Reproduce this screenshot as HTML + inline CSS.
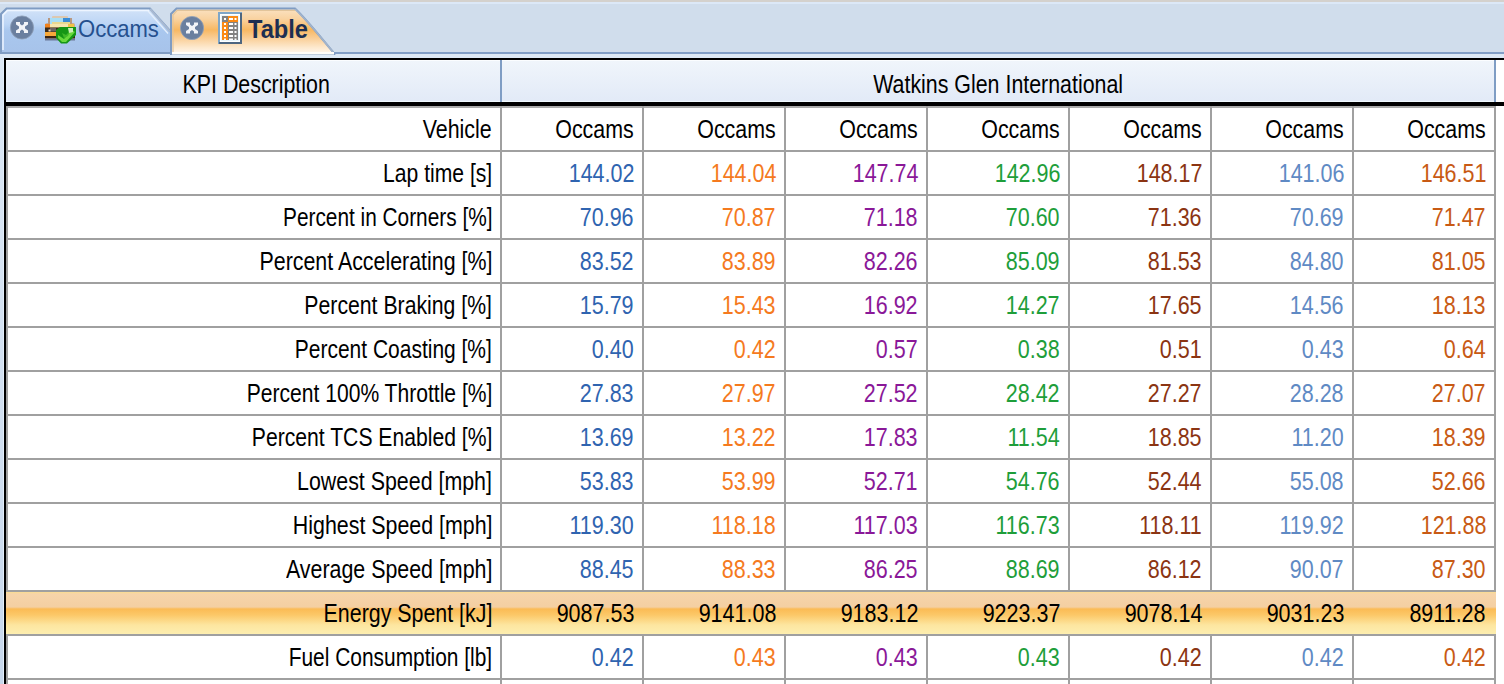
<!DOCTYPE html>
<html><head><meta charset="utf-8"><style>
html,body{margin:0;padding:0;}
body{width:1504px;height:684px;overflow:hidden;position:relative;background:#dde9f6;font-family:"Liberation Sans",sans-serif;}
.a{position:absolute;}
.t{position:absolute;white-space:nowrap;font-size:25px;line-height:30px;height:30px;}
.r{transform-origin:100% 50%;}
.c{transform-origin:50% 50%;}
</style></head><body>

<div class="a" style="left:0;top:0;width:1504px;height:2px;background:#d4d1cd"></div>
<div class="a" style="left:0;top:2px;width:1504px;height:2px;background:#dce8f7"></div>
<div class="a" style="left:0;top:4px;width:1504px;height:48px;background:#d0ddec"></div>
<div class="a" style="left:0;top:52px;width:1504px;height:2px;background:#819ec6"></div>
<div class="a" style="left:0;top:54px;width:1504px;height:4px;background:#dde9f6"></div>
<svg class="a" style="left:0;top:0" width="1504" height="58" viewBox="0 0 1504 58">
<defs>
<linearGradient id="gi" x1="0" y1="0" x2="0" y2="1">
<stop offset="0" stop-color="#d3e3f8"/><stop offset="0.35" stop-color="#bcd5f5"/><stop offset="0.5" stop-color="#a9c7ee"/><stop offset="1" stop-color="#a7c3ea"/>
</linearGradient>
<linearGradient id="ga" x1="0" y1="0" x2="0" y2="1">
<stop offset="0" stop-color="#fbe2c2"/><stop offset="0.22" stop-color="#f9d3a2"/><stop offset="0.47" stop-color="#f8b862"/><stop offset="0.62" stop-color="#f9ca8e"/><stop offset="0.85" stop-color="#fde8cc"/><stop offset="1" stop-color="#fff8f0"/>
</linearGradient>
</defs>
<!-- inactive tab -->
<path d="M1,53 L1,14 L6.5,8.5 L150,8.5 L171,32 L171,53 Z" fill="url(#gi)" stroke="#7f9cc3" stroke-width="2"/>
<path d="M150,9 L170,31.5" fill="none" stroke="#a9bad2" stroke-width="2"/><path d="M148,11 L168,33.5" fill="none" stroke="#e6f0fc" stroke-width="1.2"/>
<path d="M3,50 L3,15 L7.5,10.5 L149,10.5" fill="none" stroke="#eef5ff" stroke-width="1.5"/>
<!-- active tab -->
<path d="M171,54 L171,14 L176.5,8.5 L295,8.5 C307,20 318,34 333,52 L334,54 Z" fill="url(#ga)" stroke="#7f9cc3" stroke-width="2"/>
<path d="M295,9 C307,20 318,34 333,52" fill="none" stroke="#a2b4cc" stroke-width="1.6"/>
<path d="M173,52 L173,15 L177,10.5 L295,10.5" fill="none" stroke="#e2c49a" stroke-width="1.2"/>
<rect x="172" y="52" width="162" height="2.5" fill="#fffdf8"/>
<!-- close icons -->
<g>
<circle cx="22" cy="27.5" r="11.6" fill="#6a7f9f" stroke="#8f9fb8" stroke-width="0.8"/>
<path d="M16,22 H20 V24 L22,25.5 L24,24 V22 H28 V24.5 L25,26.5 V28.5 L28,30.5 V33 H24 V31 L22,29.5 L20,31 V33 H16 V30.5 L19,28.5 V26.5 L16,24.5 Z" fill="#f2f4f8"/>
</g>
<g>
<circle cx="192" cy="28" r="11.6" fill="#6a7f9f" stroke="#8f9fb8" stroke-width="0.8"/>
<path d="M186,22.5 H190 V24.5 L192,26 L194,24.5 V22.5 H198 V25 L195,27 V29 L198,31 V33.5 H194 V31.5 L192,30 L190,31.5 V33.5 H186 V31 L189,29 V27 L186,25 Z" fill="#f2f4f8"/>
</g>
<!-- car icon -->
<g>
<rect x="45" y="23" width="30" height="17" rx="2" fill="#c8a890"/>
<rect x="52" y="16" width="16" height="3" rx="1" fill="#dcc8b0"/>
<rect x="49" y="18" width="22" height="6" rx="1.5" fill="#a8def6"/>
<rect x="63" y="18" width="7" height="6" fill="#3a8cd6"/>
<rect x="48" y="18" width="2" height="6" fill="#b89880"/>
<rect x="70" y="18" width="2" height="6" fill="#b89880"/>
<rect x="52" y="22" width="18" height="2" fill="#e8d890"/>
<rect x="46" y="24" width="28" height="3.5" fill="#f0c246"/>
<rect x="50" y="24" width="18" height="3.5" fill="#f6e6ae"/>
<rect x="45" y="24" width="5" height="4" fill="#f0821e"/>
<rect x="45" y="27.5" width="30" height="4.5" fill="#382a1c"/>
<rect x="50" y="28" width="6" height="3.5" fill="#6c6460"/>
<rect x="48.5" y="29.5" width="2" height="2" fill="#e8d8c8"/>
<rect x="45" y="32" width="30" height="4" fill="#f6a83a"/>
<rect x="45" y="36" width="30" height="2.5" fill="#3c2412"/>
<rect x="45" y="38.5" width="30" height="2" fill="#6a7898"/>
<path d="M56,30 L60,27 L76,27 L76,35 L67,43.5 L61,43.5 L56,38 Z" fill="#159615"/>
<path d="M58,35 L64,39 L72,30 L75,32 L66,42 L62,42 L58,38 Z" fill="#68d83c"/>
<path d="M62,33 L66,35 L70,31 L68,36 L64,38 Z" fill="#40b828"/>
<path d="M68,28 L73,28 L73,32 L69,33 Z" fill="#cdeeb8"/>
</g>
<!-- table icon -->
<g>
<rect x="219" y="13" width="22" height="30" fill="#ffffff" stroke="#7ea6c8" stroke-width="2"/>
<path d="M219,43 L241,43 L241,13" fill="none" stroke="#4e6680" stroke-width="2"/>
<rect x="221" y="15" width="18" height="26" fill="#eaf6fc"/>
<rect x="222" y="16" width="16" height="24" fill="#828282"/>
<rect x="222" y="22" width="6" height="18" fill="#fb8a14"/>
<rect x="228" y="16" width="10" height="6" fill="#fb8a14"/>
<g fill="#ffffff">
<rect x="224" y="18" width="2" height="2"/><rect x="229" y="18" width="4" height="2"/><rect x="234.5" y="18" width="2" height="2"/>
<rect x="224" y="23" width="2" height="2"/><rect x="229" y="23" width="4" height="2"/><rect x="234.5" y="23" width="2" height="2"/>
<rect x="224" y="27" width="2" height="2"/><rect x="229" y="27" width="4" height="2"/><rect x="234.5" y="27" width="2" height="2"/>
<rect x="224" y="31" width="2" height="2"/><rect x="229" y="31" width="4" height="2"/><rect x="234.5" y="31" width="2" height="2"/>
<rect x="224" y="35" width="2" height="2"/><rect x="229" y="35" width="4" height="2"/><rect x="234.5" y="35" width="2" height="2"/>
<rect x="224" y="38.5" width="2" height="1.5"/><rect x="229" y="38.5" width="4" height="1.5"/><rect x="234.5" y="38.5" width="2" height="1.5"/>
</g>
</g>
</svg>
<div class="t" style="left:78px;top:14px;color:#25508e;font-size:24px"><span style="display:inline-block;transform-origin:0 50%;transform:scaleX(0.918)">Occams</span></div>
<div class="t" style="left:248px;top:14px;color:#1d2f52;font-size:25px;font-weight:bold"><span style="display:inline-block;transform-origin:0 50%;transform:scaleX(0.945)">Table</span></div>

<div class="a" style="left:0;top:58px;width:4px;height:626px;background:linear-gradient(#dce8f5,#c7d7eb)"></div>
<div class="a" style="left:3px;top:58px;width:1px;height:626px;background:#e4effb"></div>
<div class="a" style="left:4px;top:58px;width:1500px;height:626px;background:#fff"></div>
<div class="a" style="left:4px;top:58px;width:1500px;height:2px;background:#000"></div>
<div class="a" style="left:4px;top:58px;width:2px;height:626px;background:#000"></div>
<div class="a" style="left:6px;top:60px;width:1490px;height:42px;background:linear-gradient(#f0f5fb,#e2eaf7)"></div>
<div class="a" style="left:6px;top:60px;width:1490px;height:1px;background:#fbfdff"></div>
<div class="a" style="left:6px;top:101px;width:1490px;height:1px;background:#f0faff"></div>
<div class="a" style="left:500px;top:60px;width:2px;height:42px;background:#7f9dc4"></div>
<div class="a" style="left:1494px;top:60px;width:2px;height:42px;background:#7f9dc4"></div>
<div class="a" style="left:4px;top:102px;width:1500px;height:4px;background:#000"></div>
<div class="a" style="left:6px;top:106px;width:1490px;height:2px;background:#ababab"></div>
<div class="a" style="left:6px;top:150px;width:1490px;height:2px;background:#a0a0a0"></div>
<div class="a" style="left:6px;top:194px;width:1490px;height:2px;background:#a0a0a0"></div>
<div class="a" style="left:6px;top:238px;width:1490px;height:2px;background:#a0a0a0"></div>
<div class="a" style="left:6px;top:282px;width:1490px;height:2px;background:#a0a0a0"></div>
<div class="a" style="left:6px;top:326px;width:1490px;height:2px;background:#a0a0a0"></div>
<div class="a" style="left:6px;top:370px;width:1490px;height:2px;background:#a0a0a0"></div>
<div class="a" style="left:6px;top:414px;width:1490px;height:2px;background:#a0a0a0"></div>
<div class="a" style="left:6px;top:458px;width:1490px;height:2px;background:#a0a0a0"></div>
<div class="a" style="left:6px;top:502px;width:1490px;height:2px;background:#a0a0a0"></div>
<div class="a" style="left:6px;top:546px;width:1490px;height:2px;background:#a0a0a0"></div>
<div class="a" style="left:6px;top:590px;width:1490px;height:2px;background:#a0a0a0"></div>
<div class="a" style="left:6px;top:634px;width:1490px;height:2px;background:#a0a0a0"></div>
<div class="a" style="left:6px;top:678px;width:1490px;height:2px;background:#a0a0a0"></div>
<div class="a" style="left:6px;top:592px;width:1490px;height:42px;background:linear-gradient(#fbdc90 0px,#f6d4aa 2px,#f4cfa2 15px,#fbbb55 17px,#fcc868 23px,#fde6a0 33px,#fdeeb0 42px)"></div>
<div class="a" style="left:6px;top:106px;width:2px;height:486px;background:#a0a0a0"></div>
<div class="a" style="left:6px;top:634px;width:2px;height:50px;background:#a0a0a0"></div>
<div class="a" style="left:500px;top:106px;width:2px;height:486px;background:#a0a0a0"></div>
<div class="a" style="left:500px;top:634px;width:2px;height:50px;background:#a0a0a0"></div>
<div class="a" style="left:642px;top:106px;width:2px;height:486px;background:#a0a0a0"></div>
<div class="a" style="left:642px;top:634px;width:2px;height:50px;background:#a0a0a0"></div>
<div class="a" style="left:784px;top:106px;width:2px;height:486px;background:#a0a0a0"></div>
<div class="a" style="left:784px;top:634px;width:2px;height:50px;background:#a0a0a0"></div>
<div class="a" style="left:926px;top:106px;width:2px;height:486px;background:#a0a0a0"></div>
<div class="a" style="left:926px;top:634px;width:2px;height:50px;background:#a0a0a0"></div>
<div class="a" style="left:1068px;top:106px;width:2px;height:486px;background:#a0a0a0"></div>
<div class="a" style="left:1068px;top:634px;width:2px;height:50px;background:#a0a0a0"></div>
<div class="a" style="left:1210px;top:106px;width:2px;height:486px;background:#a0a0a0"></div>
<div class="a" style="left:1210px;top:634px;width:2px;height:50px;background:#a0a0a0"></div>
<div class="a" style="left:1352px;top:106px;width:2px;height:486px;background:#a0a0a0"></div>
<div class="a" style="left:1352px;top:634px;width:2px;height:50px;background:#a0a0a0"></div>
<div class="a" style="left:1494px;top:106px;width:2px;height:486px;background:#a0a0a0"></div>
<div class="a" style="left:1494px;top:634px;width:2px;height:50px;background:#a0a0a0"></div>
<div class="t c" style="left:10px;width:492px;top:69px;text-align:center;color:#000"><span style="display:inline-block;transform:scaleX(0.855)">KPI Description</span></div>
<div class="t c" style="left:502px;width:992px;top:69px;text-align:center;color:#000"><span style="display:inline-block;transform:scaleX(0.855)">Watkins Glen International</span></div>
<div class="t" style="left:8px;width:484px;top:114px;text-align:right;color:#000"><span class="r" style="display:inline-block;transform:scaleX(0.855)">Vehicle</span></div>
<div class="t" style="left:502px;width:132px;top:114px;text-align:right;color:#000"><span class="r" style="display:inline-block;transform:scaleX(0.855)">Occams</span></div>
<div class="t" style="left:644px;width:132px;top:114px;text-align:right;color:#000"><span class="r" style="display:inline-block;transform:scaleX(0.855)">Occams</span></div>
<div class="t" style="left:786px;width:132px;top:114px;text-align:right;color:#000"><span class="r" style="display:inline-block;transform:scaleX(0.855)">Occams</span></div>
<div class="t" style="left:928px;width:132px;top:114px;text-align:right;color:#000"><span class="r" style="display:inline-block;transform:scaleX(0.855)">Occams</span></div>
<div class="t" style="left:1070px;width:132px;top:114px;text-align:right;color:#000"><span class="r" style="display:inline-block;transform:scaleX(0.855)">Occams</span></div>
<div class="t" style="left:1212px;width:132px;top:114px;text-align:right;color:#000"><span class="r" style="display:inline-block;transform:scaleX(0.855)">Occams</span></div>
<div class="t" style="left:1354px;width:132px;top:114px;text-align:right;color:#000"><span class="r" style="display:inline-block;transform:scaleX(0.855)">Occams</span></div>
<div class="t" style="left:8px;width:484px;top:158px;text-align:right;color:#000"><span class="r" style="display:inline-block;transform:scaleX(0.845)">Lap time [s]</span></div>
<div class="t" style="left:502px;width:132px;top:158px;text-align:right;color:#2f64b0"><span class="r" style="display:inline-block;transform:scaleX(0.860)">144.02</span></div>
<div class="t" style="left:644px;width:132px;top:158px;text-align:right;color:#f57a1e"><span class="r" style="display:inline-block;transform:scaleX(0.860)">144.04</span></div>
<div class="t" style="left:786px;width:132px;top:158px;text-align:right;color:#8a1898"><span class="r" style="display:inline-block;transform:scaleX(0.860)">147.74</span></div>
<div class="t" style="left:928px;width:132px;top:158px;text-align:right;color:#1e9e3a"><span class="r" style="display:inline-block;transform:scaleX(0.860)">142.96</span></div>
<div class="t" style="left:1070px;width:132px;top:158px;text-align:right;color:#8b3412"><span class="r" style="display:inline-block;transform:scaleX(0.860)">148.17</span></div>
<div class="t" style="left:1212px;width:132px;top:158px;text-align:right;color:#5f8ac4"><span class="r" style="display:inline-block;transform:scaleX(0.860)">141.06</span></div>
<div class="t" style="left:1354px;width:132px;top:158px;text-align:right;color:#c85a14"><span class="r" style="display:inline-block;transform:scaleX(0.860)">146.51</span></div>
<div class="t" style="left:8px;width:484px;top:202px;text-align:right;color:#000"><span class="r" style="display:inline-block;transform:scaleX(0.833)">Percent in Corners [%]</span></div>
<div class="t" style="left:502px;width:132px;top:202px;text-align:right;color:#2f64b0"><span class="r" style="display:inline-block;transform:scaleX(0.860)">70.96</span></div>
<div class="t" style="left:644px;width:132px;top:202px;text-align:right;color:#f57a1e"><span class="r" style="display:inline-block;transform:scaleX(0.860)">70.87</span></div>
<div class="t" style="left:786px;width:132px;top:202px;text-align:right;color:#8a1898"><span class="r" style="display:inline-block;transform:scaleX(0.860)">71.18</span></div>
<div class="t" style="left:928px;width:132px;top:202px;text-align:right;color:#1e9e3a"><span class="r" style="display:inline-block;transform:scaleX(0.860)">70.60</span></div>
<div class="t" style="left:1070px;width:132px;top:202px;text-align:right;color:#8b3412"><span class="r" style="display:inline-block;transform:scaleX(0.860)">71.36</span></div>
<div class="t" style="left:1212px;width:132px;top:202px;text-align:right;color:#5f8ac4"><span class="r" style="display:inline-block;transform:scaleX(0.860)">70.69</span></div>
<div class="t" style="left:1354px;width:132px;top:202px;text-align:right;color:#c85a14"><span class="r" style="display:inline-block;transform:scaleX(0.860)">71.47</span></div>
<div class="t" style="left:8px;width:484px;top:246px;text-align:right;color:#000"><span class="r" style="display:inline-block;transform:scaleX(0.855)">Percent Accelerating [%]</span></div>
<div class="t" style="left:502px;width:132px;top:246px;text-align:right;color:#2f64b0"><span class="r" style="display:inline-block;transform:scaleX(0.860)">83.52</span></div>
<div class="t" style="left:644px;width:132px;top:246px;text-align:right;color:#f57a1e"><span class="r" style="display:inline-block;transform:scaleX(0.860)">83.89</span></div>
<div class="t" style="left:786px;width:132px;top:246px;text-align:right;color:#8a1898"><span class="r" style="display:inline-block;transform:scaleX(0.860)">82.26</span></div>
<div class="t" style="left:928px;width:132px;top:246px;text-align:right;color:#1e9e3a"><span class="r" style="display:inline-block;transform:scaleX(0.860)">85.09</span></div>
<div class="t" style="left:1070px;width:132px;top:246px;text-align:right;color:#8b3412"><span class="r" style="display:inline-block;transform:scaleX(0.860)">81.53</span></div>
<div class="t" style="left:1212px;width:132px;top:246px;text-align:right;color:#5f8ac4"><span class="r" style="display:inline-block;transform:scaleX(0.860)">84.80</span></div>
<div class="t" style="left:1354px;width:132px;top:246px;text-align:right;color:#c85a14"><span class="r" style="display:inline-block;transform:scaleX(0.860)">81.05</span></div>
<div class="t" style="left:8px;width:484px;top:290px;text-align:right;color:#000"><span class="r" style="display:inline-block;transform:scaleX(0.849)">Percent Braking [%]</span></div>
<div class="t" style="left:502px;width:132px;top:290px;text-align:right;color:#2f64b0"><span class="r" style="display:inline-block;transform:scaleX(0.860)">15.79</span></div>
<div class="t" style="left:644px;width:132px;top:290px;text-align:right;color:#f57a1e"><span class="r" style="display:inline-block;transform:scaleX(0.860)">15.43</span></div>
<div class="t" style="left:786px;width:132px;top:290px;text-align:right;color:#8a1898"><span class="r" style="display:inline-block;transform:scaleX(0.860)">16.92</span></div>
<div class="t" style="left:928px;width:132px;top:290px;text-align:right;color:#1e9e3a"><span class="r" style="display:inline-block;transform:scaleX(0.860)">14.27</span></div>
<div class="t" style="left:1070px;width:132px;top:290px;text-align:right;color:#8b3412"><span class="r" style="display:inline-block;transform:scaleX(0.860)">17.65</span></div>
<div class="t" style="left:1212px;width:132px;top:290px;text-align:right;color:#5f8ac4"><span class="r" style="display:inline-block;transform:scaleX(0.860)">14.56</span></div>
<div class="t" style="left:1354px;width:132px;top:290px;text-align:right;color:#c85a14"><span class="r" style="display:inline-block;transform:scaleX(0.860)">18.13</span></div>
<div class="t" style="left:8px;width:484px;top:334px;text-align:right;color:#000"><span class="r" style="display:inline-block;transform:scaleX(0.839)">Percent Coasting [%]</span></div>
<div class="t" style="left:502px;width:132px;top:334px;text-align:right;color:#2f64b0"><span class="r" style="display:inline-block;transform:scaleX(0.860)">0.40</span></div>
<div class="t" style="left:644px;width:132px;top:334px;text-align:right;color:#f57a1e"><span class="r" style="display:inline-block;transform:scaleX(0.860)">0.42</span></div>
<div class="t" style="left:786px;width:132px;top:334px;text-align:right;color:#8a1898"><span class="r" style="display:inline-block;transform:scaleX(0.860)">0.57</span></div>
<div class="t" style="left:928px;width:132px;top:334px;text-align:right;color:#1e9e3a"><span class="r" style="display:inline-block;transform:scaleX(0.860)">0.38</span></div>
<div class="t" style="left:1070px;width:132px;top:334px;text-align:right;color:#8b3412"><span class="r" style="display:inline-block;transform:scaleX(0.860)">0.51</span></div>
<div class="t" style="left:1212px;width:132px;top:334px;text-align:right;color:#5f8ac4"><span class="r" style="display:inline-block;transform:scaleX(0.860)">0.43</span></div>
<div class="t" style="left:1354px;width:132px;top:334px;text-align:right;color:#c85a14"><span class="r" style="display:inline-block;transform:scaleX(0.860)">0.64</span></div>
<div class="t" style="left:8px;width:484px;top:378px;text-align:right;color:#000"><span class="r" style="display:inline-block;transform:scaleX(0.843)">Percent 100% Throttle [%]</span></div>
<div class="t" style="left:502px;width:132px;top:378px;text-align:right;color:#2f64b0"><span class="r" style="display:inline-block;transform:scaleX(0.860)">27.83</span></div>
<div class="t" style="left:644px;width:132px;top:378px;text-align:right;color:#f57a1e"><span class="r" style="display:inline-block;transform:scaleX(0.860)">27.97</span></div>
<div class="t" style="left:786px;width:132px;top:378px;text-align:right;color:#8a1898"><span class="r" style="display:inline-block;transform:scaleX(0.860)">27.52</span></div>
<div class="t" style="left:928px;width:132px;top:378px;text-align:right;color:#1e9e3a"><span class="r" style="display:inline-block;transform:scaleX(0.860)">28.42</span></div>
<div class="t" style="left:1070px;width:132px;top:378px;text-align:right;color:#8b3412"><span class="r" style="display:inline-block;transform:scaleX(0.860)">27.27</span></div>
<div class="t" style="left:1212px;width:132px;top:378px;text-align:right;color:#5f8ac4"><span class="r" style="display:inline-block;transform:scaleX(0.860)">28.28</span></div>
<div class="t" style="left:1354px;width:132px;top:378px;text-align:right;color:#c85a14"><span class="r" style="display:inline-block;transform:scaleX(0.860)">27.07</span></div>
<div class="t" style="left:8px;width:484px;top:422px;text-align:right;color:#000"><span class="r" style="display:inline-block;transform:scaleX(0.846)">Percent TCS Enabled [%]</span></div>
<div class="t" style="left:502px;width:132px;top:422px;text-align:right;color:#2f64b0"><span class="r" style="display:inline-block;transform:scaleX(0.860)">13.69</span></div>
<div class="t" style="left:644px;width:132px;top:422px;text-align:right;color:#f57a1e"><span class="r" style="display:inline-block;transform:scaleX(0.860)">13.22</span></div>
<div class="t" style="left:786px;width:132px;top:422px;text-align:right;color:#8a1898"><span class="r" style="display:inline-block;transform:scaleX(0.860)">17.83</span></div>
<div class="t" style="left:928px;width:132px;top:422px;text-align:right;color:#1e9e3a"><span class="r" style="display:inline-block;transform:scaleX(0.860)">11.54</span></div>
<div class="t" style="left:1070px;width:132px;top:422px;text-align:right;color:#8b3412"><span class="r" style="display:inline-block;transform:scaleX(0.860)">18.85</span></div>
<div class="t" style="left:1212px;width:132px;top:422px;text-align:right;color:#5f8ac4"><span class="r" style="display:inline-block;transform:scaleX(0.860)">11.20</span></div>
<div class="t" style="left:1354px;width:132px;top:422px;text-align:right;color:#c85a14"><span class="r" style="display:inline-block;transform:scaleX(0.860)">18.39</span></div>
<div class="t" style="left:8px;width:484px;top:466px;text-align:right;color:#000"><span class="r" style="display:inline-block;transform:scaleX(0.855)">Lowest Speed [mph]</span></div>
<div class="t" style="left:502px;width:132px;top:466px;text-align:right;color:#2f64b0"><span class="r" style="display:inline-block;transform:scaleX(0.860)">53.83</span></div>
<div class="t" style="left:644px;width:132px;top:466px;text-align:right;color:#f57a1e"><span class="r" style="display:inline-block;transform:scaleX(0.860)">53.99</span></div>
<div class="t" style="left:786px;width:132px;top:466px;text-align:right;color:#8a1898"><span class="r" style="display:inline-block;transform:scaleX(0.860)">52.71</span></div>
<div class="t" style="left:928px;width:132px;top:466px;text-align:right;color:#1e9e3a"><span class="r" style="display:inline-block;transform:scaleX(0.860)">54.76</span></div>
<div class="t" style="left:1070px;width:132px;top:466px;text-align:right;color:#8b3412"><span class="r" style="display:inline-block;transform:scaleX(0.860)">52.44</span></div>
<div class="t" style="left:1212px;width:132px;top:466px;text-align:right;color:#5f8ac4"><span class="r" style="display:inline-block;transform:scaleX(0.860)">55.08</span></div>
<div class="t" style="left:1354px;width:132px;top:466px;text-align:right;color:#c85a14"><span class="r" style="display:inline-block;transform:scaleX(0.860)">52.66</span></div>
<div class="t" style="left:8px;width:484px;top:510px;text-align:right;color:#000"><span class="r" style="display:inline-block;transform:scaleX(0.855)">Highest Speed [mph]</span></div>
<div class="t" style="left:502px;width:132px;top:510px;text-align:right;color:#2f64b0"><span class="r" style="display:inline-block;transform:scaleX(0.860)">119.30</span></div>
<div class="t" style="left:644px;width:132px;top:510px;text-align:right;color:#f57a1e"><span class="r" style="display:inline-block;transform:scaleX(0.860)">118.18</span></div>
<div class="t" style="left:786px;width:132px;top:510px;text-align:right;color:#8a1898"><span class="r" style="display:inline-block;transform:scaleX(0.860)">117.03</span></div>
<div class="t" style="left:928px;width:132px;top:510px;text-align:right;color:#1e9e3a"><span class="r" style="display:inline-block;transform:scaleX(0.860)">116.73</span></div>
<div class="t" style="left:1070px;width:132px;top:510px;text-align:right;color:#8b3412"><span class="r" style="display:inline-block;transform:scaleX(0.860)">118.11</span></div>
<div class="t" style="left:1212px;width:132px;top:510px;text-align:right;color:#5f8ac4"><span class="r" style="display:inline-block;transform:scaleX(0.860)">119.92</span></div>
<div class="t" style="left:1354px;width:132px;top:510px;text-align:right;color:#c85a14"><span class="r" style="display:inline-block;transform:scaleX(0.860)">121.88</span></div>
<div class="t" style="left:8px;width:484px;top:554px;text-align:right;color:#000"><span class="r" style="display:inline-block;transform:scaleX(0.855)">Average Speed [mph]</span></div>
<div class="t" style="left:502px;width:132px;top:554px;text-align:right;color:#2f64b0"><span class="r" style="display:inline-block;transform:scaleX(0.860)">88.45</span></div>
<div class="t" style="left:644px;width:132px;top:554px;text-align:right;color:#f57a1e"><span class="r" style="display:inline-block;transform:scaleX(0.860)">88.33</span></div>
<div class="t" style="left:786px;width:132px;top:554px;text-align:right;color:#8a1898"><span class="r" style="display:inline-block;transform:scaleX(0.860)">86.25</span></div>
<div class="t" style="left:928px;width:132px;top:554px;text-align:right;color:#1e9e3a"><span class="r" style="display:inline-block;transform:scaleX(0.860)">88.69</span></div>
<div class="t" style="left:1070px;width:132px;top:554px;text-align:right;color:#8b3412"><span class="r" style="display:inline-block;transform:scaleX(0.860)">86.12</span></div>
<div class="t" style="left:1212px;width:132px;top:554px;text-align:right;color:#5f8ac4"><span class="r" style="display:inline-block;transform:scaleX(0.860)">90.07</span></div>
<div class="t" style="left:1354px;width:132px;top:554px;text-align:right;color:#c85a14"><span class="r" style="display:inline-block;transform:scaleX(0.860)">87.30</span></div>
<div class="t" style="left:8px;width:484px;top:598px;text-align:right;color:#000"><span class="r" style="display:inline-block;transform:scaleX(0.855)">Energy Spent [kJ]</span></div>
<div class="t" style="left:502px;width:132px;top:598px;text-align:right;color:#000"><span class="r" style="display:inline-block;transform:scaleX(0.860)">9087.53</span></div>
<div class="t" style="left:644px;width:132px;top:598px;text-align:right;color:#000"><span class="r" style="display:inline-block;transform:scaleX(0.860)">9141.08</span></div>
<div class="t" style="left:786px;width:132px;top:598px;text-align:right;color:#000"><span class="r" style="display:inline-block;transform:scaleX(0.860)">9183.12</span></div>
<div class="t" style="left:928px;width:132px;top:598px;text-align:right;color:#000"><span class="r" style="display:inline-block;transform:scaleX(0.860)">9223.37</span></div>
<div class="t" style="left:1070px;width:132px;top:598px;text-align:right;color:#000"><span class="r" style="display:inline-block;transform:scaleX(0.860)">9078.14</span></div>
<div class="t" style="left:1212px;width:132px;top:598px;text-align:right;color:#000"><span class="r" style="display:inline-block;transform:scaleX(0.860)">9031.23</span></div>
<div class="t" style="left:1354px;width:132px;top:598px;text-align:right;color:#000"><span class="r" style="display:inline-block;transform:scaleX(0.860)">8911.28</span></div>
<div class="t" style="left:8px;width:484px;top:642px;text-align:right;color:#000"><span class="r" style="display:inline-block;transform:scaleX(0.837)">Fuel Consumption [lb]</span></div>
<div class="t" style="left:502px;width:132px;top:642px;text-align:right;color:#2f64b0"><span class="r" style="display:inline-block;transform:scaleX(0.860)">0.42</span></div>
<div class="t" style="left:644px;width:132px;top:642px;text-align:right;color:#f57a1e"><span class="r" style="display:inline-block;transform:scaleX(0.860)">0.43</span></div>
<div class="t" style="left:786px;width:132px;top:642px;text-align:right;color:#8a1898"><span class="r" style="display:inline-block;transform:scaleX(0.860)">0.43</span></div>
<div class="t" style="left:928px;width:132px;top:642px;text-align:right;color:#1e9e3a"><span class="r" style="display:inline-block;transform:scaleX(0.860)">0.43</span></div>
<div class="t" style="left:1070px;width:132px;top:642px;text-align:right;color:#8b3412"><span class="r" style="display:inline-block;transform:scaleX(0.860)">0.42</span></div>
<div class="t" style="left:1212px;width:132px;top:642px;text-align:right;color:#5f8ac4"><span class="r" style="display:inline-block;transform:scaleX(0.860)">0.42</span></div>
<div class="t" style="left:1354px;width:132px;top:642px;text-align:right;color:#c85a14"><span class="r" style="display:inline-block;transform:scaleX(0.860)">0.42</span></div>
</body></html>
